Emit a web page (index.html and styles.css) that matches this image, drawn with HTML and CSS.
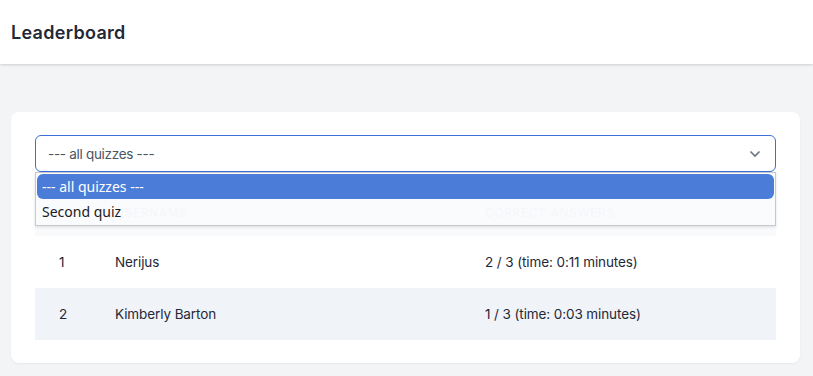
FILE: index.html
```html
<!DOCTYPE html>
<html lang="en">
<head>
<meta charset="utf-8">
<title>Leaderboard</title>
<link rel="stylesheet" href="styles.css">
</head>
<body>
<header class="topbar">
  <h2 class="title">Leaderboard</h2>
</header>
<main class="page">
  <section class="card">
    <div class="select-wrap">
      <div class="select">
        <span class="select-value">--- all quizzes ---</span>
        <svg class="chevron" width="12" height="8" viewBox="0 0 12 8"><path d="M1.5 1.5 L6 6 L10.5 1.5" fill="none" stroke="#6b7280" stroke-width="1.6"/></svg>
      </div>
      <ul class="dropdown">
        <li class="option selected">--- all quizzes ---</li>
        <li class="option">Second quiz</li>
      </ul>
    </div>
    <table class="board">
      <colgroup><col class="col-rank"><col class="col-name"><col></colgroup>
      <thead>
        <tr><th></th><th>Username</th><th>Correct answers</th></tr>
      </thead>
      <tbody>
        <tr><td>1</td><td>Nerijus</td><td>2 / 3 (time: 0:11 minutes)</td></tr>
        <tr class="alt"><td>2</td><td>Kimberly Barton</td><td>1 / 3 (time: 0:03 minutes)</td></tr>
      </tbody>
    </table>
  </section>
</main>
</body>
</html>
```

FILE: styles.css
```css
* { box-sizing: border-box; }
html, body { margin: 0; padding: 0; }
body {
  background: #f3f4f6;
  font-family: Inter, "Noto Sans", sans-serif;
  color: #111827;
  height: 376px;
  overflow: hidden;
}
.topbar {
  background: #fff;
  height: 64px;
  display: flex;
  align-items: center;
  padding: 0 11px;
  box-shadow: 0 1px 3px rgba(0,0,0,0.1), 0 1px 2px rgba(0,0,0,0.06);
  position: relative;
  z-index: 1;
}
.title {
  margin: 0;
  font-size: 18px;
  font-weight: 600;
  color: #1f2937;
  letter-spacing: 0.3px;
}
.page {
  padding: 48px 13px 0 11px;
}
.card {
  background: #fff;
  border-radius: 8px;
  padding: 23px 24px 23px 24px;
  box-shadow: 0 1px 2px rgba(0,0,0,0.05);
}
.select-wrap {
  position: relative;
  margin-bottom: 16px;
}
.select {
  height: 37px;
  border: 1px solid #3b6fd9;
  border-radius: 6px;
  display: flex;
  align-items: center;
  justify-content: space-between;
  padding: 0 14px 0 12px;
  background: #fff;
}
.select-value {
  font-size: 13.5px;
  letter-spacing: -0.3px;
  color: #4b5563;
}
.chevron { display: block; }
.dropdown {
  position: absolute;
  left: 0;
  right: 0;
  top: 37px;
  margin: 0;
  padding: 1px;
  list-style: none;
  background: rgba(250,251,253,0.95);
  border: 1px solid #c6c8cd;
  box-shadow: 0 1px 3px rgba(0,0,0,0.12);
  font-family: "Noto Sans", "Open Sans", sans-serif;
  font-size: 14px;
  z-index: 5;
}
.option {
  height: 25px;
  display: flex;
  align-items: center;
  padding: 0 5px;
  color: #1a1a1a;
}
.option.selected {
  background: #4b7dd8;
  color: #fff;
  border-radius: 6px;
}
.board {
  width: 100%;
  border-collapse: collapse;
  table-layout: fixed;
  font-size: 13.5px;
  letter-spacing: -0.1px;
}
.col-rank { width: 56px; }
.col-name { width: 370px; }
.board thead tr { background: #f9fafb; }
.board th {
  height: 48px;
  text-align: left;
  font-size: 12px;
  font-weight: 500;
  text-transform: uppercase;
  letter-spacing: 0.6px;
  color: #9ca3af;
  padding: 0 24px;
}
.board td {
  height: 52px;
  padding: 0 24px;
  color: #1f2937;
}
.board tr.alt { background: #f0f3f7; }
```
